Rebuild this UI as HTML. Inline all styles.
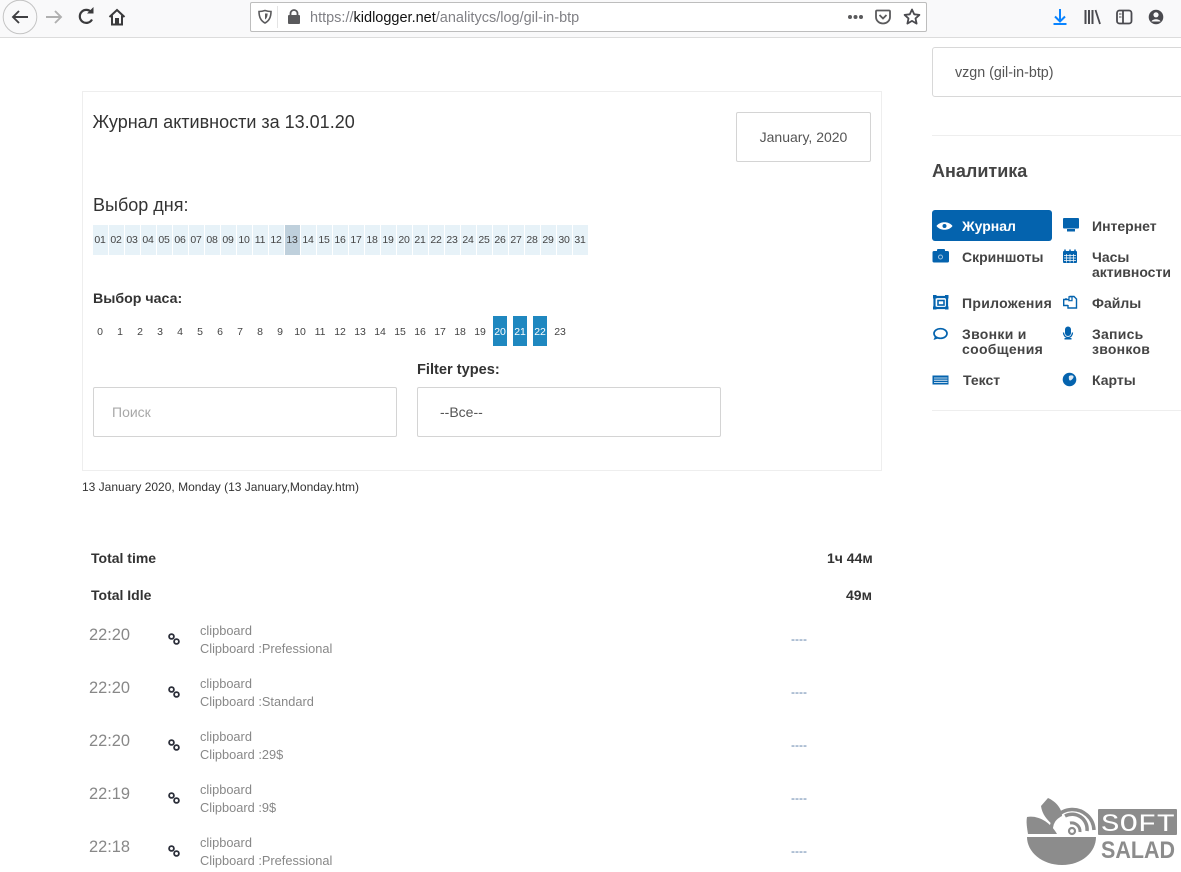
<!DOCTYPE html>
<html><head><meta charset="utf-8">
<style>
html,body{margin:0;padding:0;background:#fff}
body{width:1181px;height:872px;position:relative;overflow:hidden;font-family:"Liberation Sans",sans-serif;color:#333}
.a{position:absolute;white-space:nowrap}
.box{position:absolute;box-sizing:border-box;background:#fff}
.d{position:absolute;top:225px;width:15px;height:30px;background:#e7f2f8;font-size:10.500px;letter-spacing:-.2px;line-height:30px;text-align:center;color:#444;text-indent:-1px}
.h{position:absolute;top:316px;width:14px;height:30px;font-size:10.500px;letter-spacing:-.1px;line-height:32px;text-align:center;color:#444}
.h.on{background:#1f88c0;color:#fff}
.m{position:absolute;font-size:14px;line-height:15px;font-weight:bold;color:#444;white-space:nowrap}
.time{position:absolute;left:89px;font-size:16.400px;color:#888;line-height:18px}
.t{position:absolute;left:200px;font-size:12.800px;line-height:18px;color:#888;white-space:nowrap}
.dash{position:absolute;left:791px;font-size:12px;color:#5e7fa8;line-height:14px}
svg{position:absolute;overflow:visible}
</style></head><body>

<!-- toolbar -->
<div class="box" style="left:0;top:0;width:1181px;height:38px;background:#f9f9fa;border-bottom:1px solid #dcdcdc"></div>
<svg style="left:0;top:0" width="240" height="38" fill="none">
<circle cx="20" cy="17" r="16.800" fill="#f9f9fa" stroke="#c4c4c4"/>
<path d="M28 17H13.500M19 11l-6 6 6 6" stroke="#3f3f42" stroke-width="1.900"/>
<path d="M61 17H46M55 11l6 6-6 6" stroke="#b0b0b0" stroke-width="1.900"/>
<path d="M91.500 12.500A6.500 6.500 0 1 0 92 19.500" stroke="#3a3a3c" stroke-width="2.200"/>
<path d="M87 13.500h6.500V7z" fill="#3a3a3c"/>
<path d="M109.500 17l7.500-7 7.500 7" stroke="#3a3a3c" stroke-width="2"/>
<path d="M112 15.500v9h10v-9" stroke="#3a3a3c" stroke-width="2"/>
<rect x="115" y="18" width="4" height="6" fill="#3a3a3c"/>
</svg>

<div class="box" style="left:250px;top:2px;width:677px;height:30px;background:#fff;border:1px solid #bdbdbd;border-radius:2px"></div>
<svg style="left:0;top:0" width="300" height="38" fill="none">
<path d="M259 11.500c2.500 0 4.500-.5 6-1 1.500.5 3.500 1 6 1 0 6-2 9.500-6 11.500-4-2-6-5.500-6-11.500z" stroke="#5a5a5c" stroke-width="1.600"/>
<path d="M265 13.500h2.600c0 3-1 5-2.600 6z" fill="#5a5a5c"/>
<line x1="277.500" y1="6" x2="277.500" y2="28" stroke="#e4e4e4"/>
<rect x="288" y="15" width="12" height="9" rx="1" fill="#5a5a5c"/>
<path d="M290.500 15.500v-2a3.500 3.500 0 0 1 7 0v2" stroke="#5a5a5c" stroke-width="1.800"/>
</svg>
<div class="a" style="left:310px;top:10px;font-size:14.500px;line-height:16px;color:#808085">https://<span style="color:#111">kidlogger.net</span>/analitycs/log/gil-in-btp</div>

<svg style="left:840px;top:0" width="341" height="38" fill="none">
<circle cx="10" cy="17" r="2" fill="#5a5a5c"/><circle cx="15.500" cy="17" r="2" fill="#5a5a5c"/><circle cx="21" cy="17" r="2" fill="#5a5a5c"/>
<path d="M37 10.500h12a1 1 0 0 1 1 1V17a7 6.500 0 0 1-14 0v-5.500a1 1 0 0 1 1-1z" stroke="#5a5a5c" stroke-width="1.800"/>
<path d="M39.500 15l3.500 3.500 3.500-3.500" stroke="#5a5a5c" stroke-width="1.800"/>
<path d="M72 9.500l2.200 4.800 5.200.6-3.900 3.500 1.100 5.200-4.600-2.700-4.600 2.700 1.100-5.200-3.900-3.500 5.200-.6z" stroke="#4a4a4f" stroke-width="1.800" stroke-linejoin="round"/>
<path d="M220 9v12M215 16.500l5 5 5-5" stroke="#0a84ff" stroke-width="2"/>
<rect x="213.500" y="23" width="13" height="2" fill="#0a84ff"/>
<path d="M245.500 10v14M249 10v14M252.500 10v14" stroke="#4a4a4f" stroke-width="2"/>
<path d="M255.500 10l4.500 14" stroke="#4a4a4f" stroke-width="1.800"/>
<rect x="277" y="10.500" width="14.500" height="13" rx="2.500" stroke="#4a4a4f" stroke-width="1.800"/>
<path d="M283 10.500v13" stroke="#4a4a4f" stroke-width="1.800"/>
<path d="M279 14h2.500M279 17h2.500" stroke="#4a4a4f"/>
<circle cx="316" cy="17" r="7.300" fill="#4a4a4f"/>
<circle cx="316" cy="14.800" r="2.600" fill="#f9f9fa"/>
<path d="M311.500 21.500c1-3 8-3 9 0z" fill="#f9f9fa"/>
</svg>

<!-- main panel -->
<div class="box" style="left:82px;top:91px;width:800px;height:380px;border:1px solid #eee"></div>
<div class="a" style="left:92.500px;top:111px;font-size:18px;line-height:22px;color:#333">Журнал активности за 13.01.20</div>
<div class="box" style="left:736px;top:112px;width:135px;height:50px;border:1px solid #d4d4d4;border-radius:2px;font-size:14px;line-height:48px;text-align:center;color:#555">January, 2020</div>
<div class="a" style="left:93px;top:195px;font-size:18px;line-height:21px;color:#333">Выбор дня:</div>

<div class="d" style="left:93px">01</div><div class="d" style="left:109px">02</div><div class="d" style="left:125px">03</div><div class="d" style="left:141px">04</div><div class="d" style="left:157px">05</div><div class="d" style="left:173px">06</div><div class="d" style="left:189px">07</div><div class="d" style="left:205px">08</div><div class="d" style="left:221px">09</div><div class="d" style="left:237px">10</div><div class="d" style="left:253px">11</div><div class="d" style="left:269px">12</div><div class="d" style="left:285px;background:#bfd0dc">13</div><div class="d" style="left:301px">14</div><div class="d" style="left:317px">15</div><div class="d" style="left:333px">16</div><div class="d" style="left:349px">17</div><div class="d" style="left:365px">18</div><div class="d" style="left:381px">19</div><div class="d" style="left:397px">20</div><div class="d" style="left:413px">21</div><div class="d" style="left:429px">22</div><div class="d" style="left:445px">23</div><div class="d" style="left:461px">24</div><div class="d" style="left:477px">25</div><div class="d" style="left:493px">26</div><div class="d" style="left:509px">27</div><div class="d" style="left:525px">28</div><div class="d" style="left:541px">29</div><div class="d" style="left:557px">30</div><div class="d" style="left:573px">31</div>

<div class="a" style="left:93px;top:291px;font-size:14.200px;line-height:16px;font-weight:bold;color:#333">Выбор часа:</div>

<div class="h" style="left:93px">0</div><div class="h" style="left:113px">1</div><div class="h" style="left:133px">2</div><div class="h" style="left:153px">3</div><div class="h" style="left:173px">4</div><div class="h" style="left:193px">5</div><div class="h" style="left:213px">6</div><div class="h" style="left:233px">7</div><div class="h" style="left:253px">8</div><div class="h" style="left:273px">9</div><div class="h" style="left:293px">10</div><div class="h" style="left:313px">11</div><div class="h" style="left:333px">12</div><div class="h" style="left:353px">13</div><div class="h" style="left:373px">14</div><div class="h" style="left:393px">15</div><div class="h" style="left:413px">16</div><div class="h" style="left:433px">17</div><div class="h" style="left:453px">18</div><div class="h" style="left:473px">19</div><div class="h on" style="left:493px">20</div><div class="h on" style="left:513px">21</div><div class="h on" style="left:533px">22</div><div class="h" style="left:553px">23</div>

<div class="a" style="left:417px;top:362px;font-size:14.600px;line-height:16px;font-weight:bold;color:#333">Filter types:</div>
<div class="box" style="left:93px;top:387px;width:304px;height:50px;border:1px solid #d4d4d4;border-radius:2px;font-size:14px;line-height:48px;padding-left:18px;color:#a8a8a8">Поиск</div>
<div class="box" style="left:417px;top:387px;width:304px;height:50px;border:1px solid #d4d4d4;border-radius:2px;font-size:14px;line-height:48px;padding-left:22px;color:#555">--Все--</div>

<div class="a" style="left:82px;top:480px;font-size:12px;line-height:14px;color:#333">13 January 2020, Monday (13 January,Monday.htm)</div>

<!-- right sidebar -->
<div class="box" style="left:932px;top:47px;width:260px;height:50px;border:1px solid #d8d8d8;border-radius:3px;font-size:14.300px;line-height:50px;padding-left:22px;color:#555">vzgn (gil-in-btp)</div>
<div class="box" style="left:932px;top:135px;width:249px;height:1px;background:#eee"></div>
<div class="a" style="left:932px;top:161px;font-size:18px;line-height:21px;font-weight:bold;color:#444">Аналитика</div>
<div class="box" style="left:932px;top:210px;width:120px;height:31px;background:#0463ae;border-radius:3px"></div>

<div class="m" style="left:962px;top:219px;color:#fff">Журнал</div>
<div class="m" style="left:1092px;top:219px">Интернет</div>
<div class="m" style="left:962px;top:250px">Скриншоты</div>
<div class="m" style="left:1092px;top:250px">Часы<br>активности</div>
<div class="m" style="left:962px;top:296px;letter-spacing:.3px">Приложения</div>
<div class="m" style="left:1092px;top:296px">Файлы</div>
<div class="m" style="left:962px;top:327px;letter-spacing:.3px">Звонки и<br>сообщения</div>
<div class="m" style="left:1092px;top:327px;letter-spacing:.25px">Запись<br>звонков</div>
<div class="m" style="left:963px;top:373px">Текст</div>
<div class="m" style="left:1092px;top:373px">Карты</div>
<div class="box" style="left:932px;top:410px;width:249px;height:1px;background:#eee"></div>

<svg style="left:0;top:0" width="1181" height="420" fill="none">
<path d="M936.500 226c3.500-5 12.500-5 16 0-3.500 5-12.500 5-16 0z" fill="#fff"/><circle cx="944.500" cy="226" r="2" fill="#0463ae"/>
<rect x="1063" y="218" width="16" height="10.500" rx="1" fill="#0463ae"/><rect x="1067" y="229" width="8" height="2.500" fill="#0463ae"/>
<rect x="932.500" y="251" width="16.500" height="11.500" rx="1.500" fill="#0463ae"/><rect x="937" y="249" width="8" height="3" rx="1" fill="#0463ae"/><circle cx="940.500" cy="257" r="2" stroke="#9dc3e0"/>
<rect x="1063" y="251" width="14" height="12" rx="1" fill="#0463ae"/><path d="M1065 249.500v3M1070 249.500v3M1075 249.500v3" stroke="#0463ae" stroke-width="1.500"/><path d="M1064 255.500h12M1064 258h12M1064 260.500h12M1066.500 254v8.500M1070 254v8.500M1073.500 254v8.500" stroke="#fff" stroke-width=".7"/>
<rect x="934.500" y="297" width="12.500" height="11" stroke="#0463ae" stroke-width="2.200"/><rect x="938" y="300.500" width="6" height="4.500" stroke="#0463ae" stroke-width="1.600"/><path d="M933 295h3.500v3.500H933zM945 295h3.500v3.500H945zM933 306.500h3.500v3H933zM945 306.500h3.500v3H945z" fill="#0463ae"/>
<path d="M1063.700 299.500h5.500v6h-5.500z" stroke="#0463ae" stroke-width="1.400" fill="#fff"/>
<path d="M1069.500 296.500h4.500l2.500 2.500v9h-8.500v-3" stroke="#0463ae" stroke-width="1.400" fill="#fff"/>
<path d="M1069 296.700h3v4h-3zM1066 300v-2" stroke="#0463ae" stroke-width="1.200"/>
<ellipse cx="940.500" cy="333.500" rx="6.500" ry="4.800" stroke="#0463ae" stroke-width="1.700"/><path d="M935 336.500l-1.500 3.500 4.500-1.500z" fill="#0463ae"/>
<rect x="1065" y="326.500" width="6" height="9.500" rx="3" fill="#0463ae"/><path d="M1063.500 332.500a4.500 5 0 0 0 9 0" stroke="#0463ae" stroke-width="1.300"/><rect x="1064.500" y="338" width="7" height="1.500" fill="#0463ae"/>
<rect x="932.500" y="375.500" width="16" height="9" fill="#0463ae"/><path d="M934 378h13.500M934 380.200h13.500M934 382.400h13.500" stroke="#fff" stroke-width=".8"/>
<circle cx="1069.500" cy="379.500" r="6.800" fill="#0463ae"/><path d="M1069 376c2.500-1.300 5-.5 4.500 1.200s-2.500 3.300-3.500 3.300-1.500-2.500-1-4.500z" fill="#dce9f4"/>
</svg>

<!-- stats -->
<div class="a" style="left:91px;top:550px;font-size:14px;line-height:16px;font-weight:bold;color:#333">Total time</div>
<div class="a" style="left:827px;top:550px;font-size:14px;line-height:16px;font-weight:bold;color:#333">1ч 44м</div>
<div class="a" style="left:91px;top:587px;font-size:14px;line-height:16px;font-weight:bold;color:#333">Total Idle</div>
<div class="a" style="left:846px;top:587px;font-size:14px;line-height:16px;font-weight:bold;color:#333">49м</div>

<!-- rows -->
<div class="time" style="top:626px">22:20</div><div class="t" style="top:622px">clipboard<br>Clipboard :Prefessional</div><div class="dash" style="top:632px">----</div>
<div class="time" style="top:679px">22:20</div><div class="t" style="top:675px">clipboard<br>Clipboard :Standard</div><div class="dash" style="top:685px">----</div>
<div class="time" style="top:732px">22:20</div><div class="t" style="top:728px">clipboard<br>Clipboard :29$</div><div class="dash" style="top:738px">----</div>
<div class="time" style="top:785px">22:19</div><div class="t" style="top:781px">clipboard<br>Clipboard :9$</div><div class="dash" style="top:791px">----</div>
<div class="time" style="top:838px">22:18</div><div class="t" style="top:834px">clipboard<br>Clipboard :Prefessional</div><div class="dash" style="top:844px">----</div>

<svg style="left:0;top:0" width="200" height="872" fill="none" stroke="#2c2f3a" stroke-width="1.800">
<circle cx="171.500" cy="636.500" r="2.400"/><circle cx="176.500" cy="641.500" r="2.400"/>
<circle cx="171.500" cy="689.500" r="2.400"/><circle cx="176.500" cy="694.500" r="2.400"/>
<circle cx="171.500" cy="742.500" r="2.400"/><circle cx="176.500" cy="747.500" r="2.400"/>
<circle cx="171.500" cy="795.500" r="2.400"/><circle cx="176.500" cy="800.500" r="2.400"/>
<circle cx="171.500" cy="848.500" r="2.400"/><circle cx="176.500" cy="853.500" r="2.400"/>
</svg>

<!-- watermark -->
<svg style="left:1020px;top:790px" width="161" height="82" fill="none">
<path d="M7 47H76C76 62 62 75 42 75C22 75 7 62 7 47z" fill="#8c8c8c"/>
<path d="M21 16L28 8C35 11 42 18 42 26C38 28 35 31 33 35C27 30 22 24 21 16z" fill="#8c8c8c"/>
<path d="M7 27C18 25 30 32 37 44H8C7 38 6 32 7 27z" fill="#8c8c8c"/>
<path d="M31 42A21.500 21.500 0 0 1 74 40" stroke="#8c8c8c" stroke-width="3.500"/>
<path d="M45 26A15 15 0 0 1 67 41" stroke="#8c8c8c" stroke-width="3.500"/>
<path d="M50 33A8.500 8.500 0 0 1 60 42" stroke="#8c8c8c" stroke-width="3"/>
<circle cx="52" cy="41" r="3" stroke="#8c8c8c" stroke-width="2.200"/>
<rect x="78" y="19" width="79" height="26" rx="1" fill="#8c8c8c"/>
<text x="81" y="41" font-family="Liberation Mono" font-size="25" fill="#fff" textLength="74" lengthAdjust="spacingAndGlyphs">SOFT</text>
<text x="81" y="68" font-family="Liberation Sans" font-size="24" font-weight="bold" fill="#8c8c8c" textLength="74" lengthAdjust="spacingAndGlyphs">SALAD</text>
</svg>

</body></html>
